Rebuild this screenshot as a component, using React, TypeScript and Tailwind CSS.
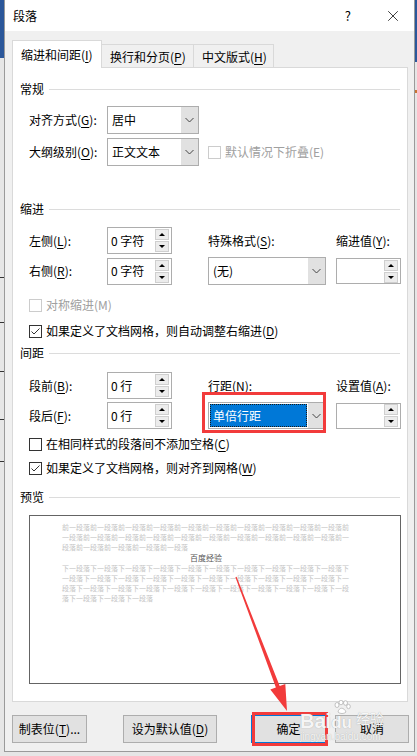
import { X } from "lucide-react";

function K({ k }: { k: string }) {
  return <span className="underline underline-offset-[2px]">{k}</span>;
}

function Section({ title }: { title: string }) {
  return (
    <div className="flex h-[16px] items-center pl-[7px] pr-[7px]">
      <span>{title}</span>
      <div className="ml-[5px] h-px flex-1 bg-[#dcdcdc]" />
    </div>
  );
}

function Chevron() {
  return (
    <svg width="9" height="6" viewBox="0 0 9 6">
      <path d="M0.5 1 L4.5 5 L8.5 1" fill="none" stroke="#444" strokeWidth="1" />
    </svg>
  );
}

function Combo(props: { value: string; w: string; selected?: boolean }) {
  return (
    <div className={`${props.w} flex h-full border border-[#adadad] bg-white`}>
      <div className="flex flex-1 items-center p-[1px]">
        {props.selected ? (
          <div className="flex h-full w-full items-center border border-dotted border-[#1a1a1a] bg-[#0078d7] pl-[2px] text-white">
            {props.value}
          </div>
        ) : (
          <span className="pl-[3px]">{props.value}</span>
        )}
      </div>
      <div className="flex w-[17px] items-center justify-center bg-[#e1e1e1]">
        <Chevron />
      </div>
    </div>
  );
}

function Spin({ value }: { value: string }) {
  return (
    <div className="flex h-full w-[65px] items-center border border-[#adadad] bg-white">
      <span className="flex-1 pl-[3px]">{value}</span>
      <div className="mr-[2px] flex flex-col gap-[1px]">
        <div className="flex h-[11px] w-[14px] items-center justify-center border border-[#cfcfcf] bg-[#ececec]">
          <div className="h-0 w-0 border-x-[3px] border-b-[3px] border-x-transparent border-b-black" />
        </div>
        <div className="flex h-[11px] w-[14px] items-center justify-center border border-[#cfcfcf] bg-[#ececec]">
          <div className="h-0 w-0 border-x-[3px] border-t-[3px] border-x-transparent border-t-black" />
        </div>
      </div>
    </div>
  );
}

function Check(props: { checked?: boolean; disabled?: boolean }) {
  return (
    <div
      className={`flex h-[13px] w-[13px] items-center justify-center border bg-white ${
        props.disabled ? "border-[#cccccc]" : "border-[#333333]"
      }`}
    >
      {props.checked && (
        <svg width="11" height="11" viewBox="0 0 11 11">
          <path d="M1.5 5.5 L4 8 L9.5 2.5" fill="none" stroke="#333" strokeWidth="1" />
        </svg>
      )}
    </div>
  );
}

const before = "前一段落".repeat(25);
const after = "下一段落".repeat(34);

export default function App() {
  return (
    <div className="relative flex h-[756px] w-[417px] overflow-hidden bg-[#e6e6e6] font-['Noto_Sans_CJK_SC',sans-serif] text-[12px] text-black">
      {/* background app, left edge */}
      <div className="flex w-[4px] flex-col">
        <div className="h-[58px] bg-[#2b579a]" />
        <div className="mt-[219px] h-px bg-[#333]" />
        <div className="mt-[44px] h-px bg-[#333]" />
        <div className="mt-[48px] h-px bg-[#333]" />
        <div className="mt-[47px] h-px bg-[#333]" />
        <div className="mt-[41px] h-px bg-[#333]" />
      </div>

      {/* dialog */}
      <div className="flex h-[752px] w-[411px] flex-col border-x border-b border-[#9a9a9a] bg-[#f0f0f0]">
        <div className="flex h-[31px] shrink-0 items-center bg-white pl-[8px]">
          <span className="text-[12px]">段落</span>
          <span className="ml-auto mr-[33px] text-[13px]">?</span>
          <X size={18} strokeWidth={1} className="mr-[12px]" />
        </div>

        <div className="mt-[9px] flex h-[28px] items-end pl-[7px]">
          <div className="relative z-10 flex h-[28px] w-[90px] items-center border-x border-t border-[#d9d9d9] bg-white pl-[8px]">
            缩进和间距(<K k="I" />)
          </div>
          <div className="flex h-[24px] w-[92px] items-center border-r border-t border-[#d9d9d9] bg-[#f0f0f0] pl-[8px]">
            换行和分页(<K k="P" />)
          </div>
          <div className="flex h-[24px] w-[80px] items-center border-r border-t border-[#d9d9d9] bg-[#f0f0f0] pl-[8px]">
            中文版式(<K k="H" />)
          </div>
        </div>

        <div className="-mt-px ml-[7px] flex h-[635px] w-[396px] flex-col border border-[#d9d9d9] bg-white">
          <div className="mt-[13px]">
            <Section title="常规" />
          </div>
          <div className="mt-[9px] flex h-[28px] items-center pl-[16px]">
            <span className="w-[78px]">
              对齐方式(<K k="G" />):
            </span>
            <Combo value="居中" w="w-[92px]" />
          </div>
          <div className="mt-[4px] flex h-[28px] items-center pl-[16px]">
            <span className="w-[78px]">
              大纲级别(<K k="O" />):
            </span>
            <Combo value="正文文本" w="w-[92px]" />
            <div className="ml-[9px]">
              <Check disabled />
            </div>
            <span className="ml-[4px] text-[#a0a0a0]">默认情况下折叠(E)</span>
          </div>

          <div className="mt-[35px]">
            <Section title="缩进" />
          </div>
          <div className="mt-[10px] flex h-[27px] items-center pl-[16px]">
            <span className="w-[78px]">
              左侧(<K k="L" />):
            </span>
            <Spin value="0 字符" />
            <span className="ml-[36px] w-[128px]">
              特殊格式(<K k="S" />):
            </span>
            <span>
              缩进值(<K k="Y" />):
            </span>
          </div>
          <div className="mt-[3px] flex h-[28px] items-center pl-[16px]">
            <span className="w-[78px]">
              右侧(<K k="R" />):
            </span>
            <div className="h-[27px]">
              <Spin value="0 字符" />
            </div>
            <div className="ml-[36px] h-full">
              <Combo value="(无)" w="w-[118px]" />
            </div>
            <div className="ml-[10px] h-[26px]">
              <Spin value="" />
            </div>
          </div>
          <div className="mt-[10px] flex h-[20px] items-center gap-[4px] pl-[16px] text-[#a0a0a0]">
            <Check disabled />
            <span>对称缩进(M)</span>
          </div>
          <div className="mt-[6px] flex h-[20px] items-center gap-[4px] pl-[16px]">
            <Check checked />
            <span>
              如果定义了文档网格，则自动调整右缩进(<K k="D" />)
            </span>
          </div>

          <div className="mt-[4px]">
            <Section title="间距" />
          </div>
          <div className="mt-[11px] flex h-[27px] items-center pl-[16px]">
            <span className="w-[78px]">
              段前(<K k="B" />):
            </span>
            <Spin value="0 行" />
            <span className="ml-[36px] w-[128px]">
              行距(<K k="N" />):
            </span>
            <span>
              设置值(<K k="A" />):
            </span>
          </div>
          <div className="mt-[3px] flex h-[27px] items-center pl-[16px]">
            <span className="w-[78px]">
              段后(<K k="F" />):
            </span>
            <Spin value="0 行" />
            <div className="ml-[36px] h-full">
              <Combo value="单倍行距" w="w-[118px]" selected />
            </div>
            <div className="ml-[10px] h-[26px]">
              <Spin value="" />
            </div>
          </div>
          <div className="mt-[5px] flex h-[20px] items-center gap-[4px] pl-[16px]">
            <Check />
            <span>
              在相同样式的段落间不添加空格(<K k="C" />)
            </span>
          </div>
          <div className="mt-[4px] flex h-[20px] items-center gap-[4px] pl-[16px]">
            <Check checked />
            <span>
              如果定义了文档网格，则对齐到网格(<K k="W" />)
            </span>
          </div>

          <div className="mt-[11px]">
            <Section title="预览" />
          </div>
          <div className="ml-[16px] mt-[10px] h-[169px] w-[372px] border border-[#646464] bg-white pt-[6px]">
            <div className="ml-[32px] w-[288px] break-all text-[7px] leading-[10px] text-[#c4c4c4]">{before}</div>
            <div className="ml-[32px] w-[288px] text-center text-[8px] leading-[11px] text-[#555]">百度经验</div>
            <div className="ml-[32px] w-[288px] break-all text-[7px] leading-[10px] text-[#c4c4c4]">{after}</div>
          </div>
        </div>

        <div className="mt-[13px] flex h-[28px] pl-[7px]">
          <div className="flex w-[75px] items-center justify-center border border-[#adadad] bg-[#e1e1e1]">
            制表位(<K k="T" />)...
          </div>
          <div className="ml-[36px] flex w-[94px] items-center justify-center border border-[#adadad] bg-[#e1e1e1]">
            设为默认值(<K k="D" />)
          </div>
          <div className="ml-[34px] flex w-[75px] items-center justify-center border border-[#0078d7] bg-[#e1e1e1]">
            确定
          </div>
          <div className="ml-[9px] flex w-[74px] items-center justify-center border border-[#adadad] bg-[#e1e1e1]">
            取消
          </div>
        </div>
      </div>

      {/* background app, right edge */}
      <div className="flex w-[2px] flex-col">
        <div className="h-[62px] bg-[#2b579a]" />
        <div className="mt-[28px] h-[3px] bg-[#c87533]" />
      </div>

      {/* annotations */}
      <div className="pointer-events-none absolute left-[202px] top-[392px] h-[41px] w-[124px] border-[3px] border-[#f23b3b]" />
      <div className="pointer-events-none absolute left-[252px] top-[712px] h-[34px] w-[76px] border-[3px] border-[#f23b3b]" />
      <svg className="pointer-events-none absolute left-0 top-0" width="417" height="756">
        <polygon
          points="235.4,577.2 236.6,576.8 279.7,686 285.3,683.9 287,711 270.3,689.5 275.9,687.4"
          fill="#f23b3b"
        />
      </svg>

      {/* watermark */}
      <div className="pointer-events-none absolute left-[300px] top-[700px] font-['Liberation_Sans',sans-serif] text-white/90 [text-shadow:0_0_1px_#9a9a9a]">
        <div className="flex items-end">
          <span className="text-[20px] font-bold leading-[20px]">Bai</span>
          <div className="flex flex-col items-center">
            <svg width="18" height="14" viewBox="0 0 18 14">
              <g fill="white" stroke="#a0a0a0" strokeWidth="0.6">
                <ellipse cx="4" cy="5" rx="2" ry="2.5" />
                <ellipse cx="8" cy="2.5" rx="2" ry="2.3" />
                <ellipse cx="12.5" cy="3" rx="2" ry="2.3" />
                <ellipse cx="15.5" cy="6.5" rx="1.8" ry="2.2" />
                <path d="M5 12 C6 7 11 7 13 12 C11 14 7 14 5 12 Z" />
              </g>
            </svg>
            <span className="text-[17px] font-bold leading-[17px]">du</span>
          </div>
          <span className="mb-[5px] ml-[4px] font-['Noto_Sans_CJK_SC',sans-serif] text-[14px] leading-[16px]">经验</span>
        </div>
        <div className="text-[10px] leading-[12px]">jingyan.baidu.com</div>
      </div>
    </div>
  );
}
